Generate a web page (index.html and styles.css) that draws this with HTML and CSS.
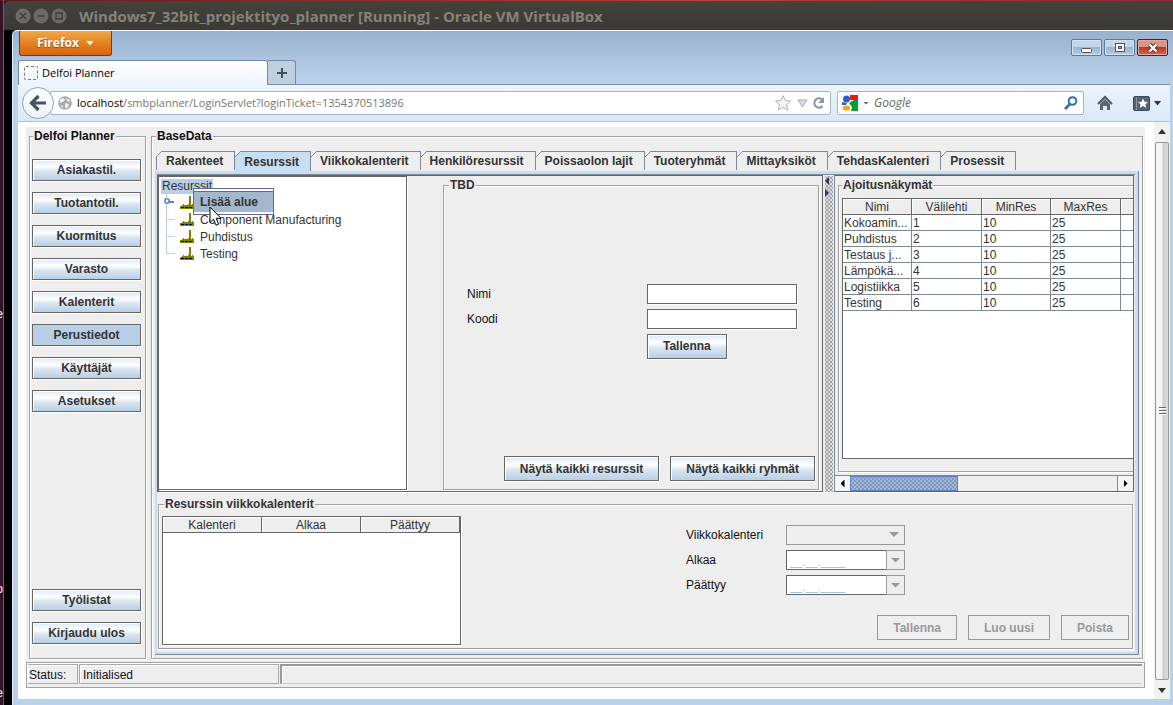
FILE: index.html
```html
<!DOCTYPE html>
<html lang="fi">
<head>
<meta charset="utf-8">
<title>Delfoi Planner</title>
<link rel="stylesheet" href="styles.css">
</head>
<body>
<div class="desktop">
  <div class="edge" aria-hidden="true"><span class="edge-a">e</span><span class="edge-b">o</span><span class="edge-c">e</span></div>
  <div class="vm">
    <header class="vm-title">
      <svg class="vm-buttons" width="54" height="18" viewBox="0 0 54 18" aria-hidden="true">
        <g fill="#6b6a65"><circle cx="9" cy="9" r="7.5"/><circle cx="27" cy="9" r="7.5"/><circle cx="45" cy="9" r="7.5"/></g>
        <path d="M6 6l6 6M12 6l-6 6M23.500 9h7M42 6h6v6h-6z" stroke="#3c3b37" stroke-width="1.3" fill="none"/>
      </svg>
      <h1 class="vm-name">Windows7_32bit_projektityo_planner [Running] - Oracle VM VirtualBox</h1>
    </header>
    <div class="browser">
      <div class="caption">
        <button class="firefox" type="button">Firefox <i class="caret white"></i></button>
        <div class="win-buttons">
          <button class="win" type="button" aria-label="Minimize"><svg width="12" height="12" viewBox="0 0 12 12"><rect x=".5" y="6.500" width="10" height="4" rx="1" fill="#f4f6f8" stroke="#4a5363"/></svg></button>
          <button class="win" type="button" aria-label="Maximize"><svg width="12" height="12" viewBox="0 0 12 12"><rect x="1.500" y="1.500" width="9" height="8" fill="#fff" stroke="#4a5363"/><rect x="4.500" y="4.500" width="3" height="2" fill="#8ba3bd" stroke="#4a5363"/></svg></button>
          <button class="win close" type="button" aria-label="Close"><svg width="12" height="12" viewBox="0 0 12 12"><path d="M2.500 2.500l7 7M9.500 2.500l-7 7" stroke="#4e3540" stroke-width="4.400"/><path d="M2.500 2.500l7 7M9.500 2.500l-7 7" stroke="#fff" stroke-width="2.400"/></svg></button>
        </div>
      </div>
      <div class="tabstrip">
        <div class="btab"><span class="blank-icon"></span>Delfoi Planner</div>
        <button class="newtab" type="button" aria-label="New tab"><svg width="12" height="12" viewBox="0 0 12 12"><path d="M6 1v10M1 6h10" stroke="#3f4d5c" stroke-width="2"/></svg></button>
      </div>
      <div class="navbar">
        <button class="back" type="button" aria-label="Back"><svg width="18" height="18" viewBox="0 0 18 18"><path d="M9.500 2L2.500 9l7 7M3 9h14" fill="none" stroke="#46525f" stroke-width="3.200"/></svg></button>
        <div class="urlbar">
          <svg width="14" height="14" viewBox="0 0 14 14" aria-hidden="true"><circle cx="7" cy="7" r="6.800" fill="#a9a9a9"/><path d="M2 3l4-1 1 2-2 2-3 1zM8 2l4 2-1 2-2-1zM7 7l4 1-1 3-2 2-1-3zM2 9l3 1v2z" fill="#f2f2f2"/></svg>
          <span class="url"><b>localhost</b>/smbplanner/LoginServlet?loginTicket=1354370513896</span>
          <svg width="52" height="18" viewBox="0 0 52 18" aria-hidden="true"><path d="M9 1.500l2.300 5 5.200.6-3.900 3.600 1.100 5.300L9 13.400 4.300 16l1.100-5.300L1.500 7.100l5.200-.6z" fill="#f3f3f3" stroke="#b3b3b3"/><path d="M24 6h9l-4.500 7z" fill="#d5dde5" stroke="#a3afbb"/><path d="M48 5.500A4.600 4.600 0 1 0 48.500 12" fill="none" stroke="#8797a6" stroke-width="2.200"/><path d="M50 3v6h-6z" fill="#8797a6"/></svg>
        </div>
        <div class="search">
          <svg width="16" height="16" viewBox="0 0 16 16" aria-hidden="true"><path d="M0 0h16v16H0z" fill="#fff"/><path d="M8 0h8v5H8z" fill="#e21b1b"/><path d="M7 8l5-3h4v11H9l1-4z" fill="#0a9a3c"/><circle cx="4.500" cy="4" r="3.500" fill="#2a5fc4"/><path d="M0 7l5 1-1 2H0z" fill="#2a5fc4"/><ellipse cx="4.500" cy="13" rx="3.800" ry="2.600" fill="#f2a90f"/></svg>
          <i class="caret small"></i>
          <input class="search-box" type="text" aria-label="Search" placeholder="Google">
          <svg width="14" height="14" viewBox="0 0 14 14" aria-hidden="true"><circle cx="8.500" cy="5" r="3.800" fill="none" stroke="#2f6fb0" stroke-width="2"/><path d="M6 8l-5 5" stroke="#2f6fb0" stroke-width="2.600"/></svg>
        </div>
        <button class="tool" type="button" aria-label="Home"><svg width="16" height="16" viewBox="0 0 16 16"><path d="M1 9l7-7 7 7" fill="none" stroke="#4a5563" stroke-width="2"/><path d="M3 9l5-5 5 5v6h-3v-4H6v4H3z" fill="#5a6572"/></svg></button>
        <button class="tool marks" type="button" aria-label="Bookmarks"><svg width="17" height="15" viewBox="0 0 17 15"><rect x=".5" y=".5" width="16" height="14" rx="1.500" fill="#566270" stroke="#3f4a57"/><path d="M3.500 1v13" stroke="#8d98a5"/><path d="M10 2.500l1.500 3.200 3.500.3-2.600 2.300.8 3.500L10 10l-3.200 1.800.8-3.500L5 6l3.500-.3z" fill="#fff"/></svg><i class="caret dark"></i></button>
      </div>
      <div class="viewport">
        <main class="page">
          <div class="applet">
            <fieldset class="etched side">
              <legend>Delfoi Planner</legend>
              <button class="jbtn" type="button">Asiakastil.</button>
              <button class="jbtn" type="button">Tuotantotil.</button>
              <button class="jbtn" type="button">Kuormitus</button>
              <button class="jbtn" type="button">Varasto</button>
              <button class="jbtn" type="button">Kalenterit</button>
              <button class="jbtn pressed" type="button">Perustiedot</button>
              <button class="jbtn" type="button">Käyttäjät</button>
              <button class="jbtn" type="button">Asetukset</button>
              <button class="jbtn push" type="button">Työlistat</button>
              <button class="jbtn" type="button">Kirjaudu ulos</button>
            </fieldset>
            <fieldset class="etched base">
              <legend>BaseData</legend>
              <div class="tabs" role="tablist">
                <button class="tab" role="tab" type="button">Rakenteet</button>
                <button class="tab on" role="tab" type="button" aria-selected="true">Resurssit</button>
                <button class="tab" role="tab" type="button">Viikkokalenterit</button>
                <button class="tab" role="tab" type="button">Henkilöresurssit</button>
                <button class="tab" role="tab" type="button">Poissaolon lajit</button>
                <button class="tab" role="tab" type="button">Tuoteryhmät</button>
                <button class="tab" role="tab" type="button">Mittayksiköt</button>
                <button class="tab" role="tab" type="button">TehdasKalenteri</button>
                <button class="tab" role="tab" type="button">Prosessit</button>
              </div>
              <div class="pane">
                <div class="inner">
                  <div class="split">
                    <div class="left">
                      <div class="tree">
                        <span class="root">Resurssit</span>
                        <ul class="nodes">
                          <li class="node"><svg class="branch" width="10" height="17" viewBox="0 0 10 17"><path d="M1.500 0v17" stroke="#b8cfe5"/><path d="M3 8h6" stroke="#6382bf" stroke-width="2"/></svg><svg class="factory" width="14" height="13" viewBox="0 0 14 13"><use href="#plant"/></svg></li>
                          <li class="node"><svg class="branch" width="10" height="17" viewBox="0 0 10 17"><path d="M1.500 0v17M1 8.500h9" stroke="#b8cfe5"/></svg><svg class="factory" width="14" height="13" viewBox="0 0 14 13"><g id="plant"><path d="M9 0h2v9h1V8h1v1h1v4H0V10h2V9h1v-1h1v1h4V8h1z" fill="#808000"/><path d="M1 11.500h3M5 11.500h3M9 11.500h3" stroke="#000080"/></g></svg>Component Manufacturing</li>
                          <li class="node"><svg class="branch" width="10" height="17" viewBox="0 0 10 17"><path d="M1.500 0v17M1 8.500h9" stroke="#b8cfe5"/></svg><svg class="factory" width="14" height="13" viewBox="0 0 14 13"><use href="#plant"/></svg>Puhdistus</li>
                          <li class="node"><svg class="branch" width="10" height="17" viewBox="0 0 10 17"><path d="M1.500 0v8.500H10" stroke="#b8cfe5" fill="none"/></svg><svg class="factory" width="14" height="13" viewBox="0 0 14 13"><use href="#plant"/></svg>Testing</li>
                        </ul>
                        <svg class="handle" width="8" height="8" viewBox="0 0 8 8" aria-hidden="true"><circle cx="4" cy="4" r="2.200" fill="#fff" stroke="#6382bf" stroke-width="1.600"/></svg>
                        <div class="popup" role="menu"><button class="item" role="menuitem" type="button">Lisää alue</button></div>
                        <svg class="cursor" width="13" height="21" viewBox="0 0 13 21" aria-hidden="true"><path d="M1 1v15.500l3.500-3.300 2.500 6 2.600-1.100L7.200 12.300H12z" fill="#fff" stroke="#000"/></svg>
                      </div>
                      <fieldset class="etched tbd">
                        <legend>TBD</legend>
                        <div class="fields">
                          <label for="nimi">Nimi</label><input class="jtext" id="nimi" type="text">
                          <label for="koodi">Koodi</label><input class="jtext" id="koodi" type="text">
                          <button class="jbtn wide save" type="button">Tallenna</button>
                        </div>
                        <div class="actions">
                          <button class="jbtn wide" type="button">Näytä kaikki resurssit</button>
                          <button class="jbtn wide" type="button">Näytä kaikki ryhmät</button>
                        </div>
                      </fieldset>
                    </div>
                    <div class="divider"><i class="tri l"></i><i class="tri r"></i></div>
                    <div class="right">
                      <div class="clip">
                        <fieldset class="etched views">
                          <legend>Ajoitusnäkymät</legend>
                          <div class="grid-box">
                            <table class="jtable">
                              <colgroup><col class="c69"><col class="c70"><col class="c69"><col class="c70"><col class="c70"></colgroup>
                              <thead><tr><th>Nimi</th><th>Välilehti</th><th>MinRes</th><th>MaxRes</th><th></th></tr></thead>
                              <tbody>
                                <tr><td>Kokoamin...</td><td>1</td><td>10</td><td>25</td><td></td></tr>
                                <tr><td>Puhdistus</td><td>2</td><td>10</td><td>25</td><td></td></tr>
                                <tr><td>Testaus j...</td><td>3</td><td>10</td><td>25</td><td></td></tr>
                                <tr><td>Lämpökä...</td><td>4</td><td>10</td><td>25</td><td></td></tr>
                                <tr><td>Logistiikka</td><td>5</td><td>10</td><td>25</td><td></td></tr>
                                <tr><td>Testing</td><td>6</td><td>10</td><td>25</td><td></td></tr>
                              </tbody>
                            </table>
                          </div>
                        </fieldset>
                      </div>
                      <div class="hscroll">
                        <button class="arrow" type="button" aria-label="Left"><i class="tri black l"></i></button>
                        <div class="track"><div class="thumb"></div></div>
                        <button class="arrow end" type="button" aria-label="Right"><i class="tri black r"></i></button>
                      </div>
                    </div>
                  </div>
                  <fieldset class="etched weeks">
                    <legend>Resurssin viikkokalenterit</legend>
                    <div class="list">
                      <table class="jtable"><thead><tr><th>Kalenteri</th><th>Alkaa</th><th>Päättyy</th></tr></thead></table>
                    </div>
                    <div class="week-form">
                      <div class="rows">
                        <label for="vk">Viikkokalenteri</label>
                        <div class="combo off"><select id="vk" disabled><option></option></select><i class="caret gray"></i></div>
                        <label for="alkaa">Alkaa</label>
                        <div class="combo"><input id="alkaa" type="text" value="__.__.____"><button class="drop" type="button" aria-label="Avaa"><i class="caret gray"></i></button></div>
                        <label for="paattyy">Päättyy</label>
                        <div class="combo"><input id="paattyy" type="text" value="__.__.____"><button class="drop" type="button" aria-label="Avaa"><i class="caret gray"></i></button></div>
                      </div>
                      <div class="actions">
                        <button class="jbtn wide" type="button" disabled>Tallenna</button>
                        <button class="jbtn wide" type="button" disabled>Luo uusi</button>
                        <button class="jbtn wide" type="button" disabled>Poista</button>
                      </div>
                    </div>
                  </fieldset>
                </div>
              </div>
            </fieldset>
          </div>
          <footer class="status"><span class="cell name">Status:</span><span class="cell value">Initialised</span><span class="cell rest"></span></footer>
        </main>
        <div class="vscroll" aria-hidden="true"><i class="caret dark up"></i><div class="vthumb"><span class="grip"></span></div><i class="caret dark"></i></div>
      </div>
    </div>
  </div>
</div>
</body>
</html>
```
FILE: styles.css
```css
* { box-sizing: border-box; }
body { margin: 0; font: 12px/14px "Liberation Sans", Arial, sans-serif; color: #333; }
button, input, select { font: inherit; color: inherit; margin: 0; padding: 0; border-radius: 0; }
svg { display: block; flex: none; }
fieldset { margin: 0; min-width: 0; }

.desktop { display: flex; min-height: 100vh; background: linear-gradient(90deg, #5e1a24, #b8432f 60%, #8c2a35) top / 100% 1px no-repeat #35122a; }
.edge { position: relative; width: 4px; flex: none; overflow: hidden; border-right: 1px solid #6d5f68; color: #fff; }
.edge span { position: absolute; right: 0; }
.edge-a { top: 307px; }
.edge-b { top: 582px; }
.edge-c { top: 686px; }
.vm { flex: 1; min-width: 0; display: flex; flex-direction: column; margin-top: 1px; background: #000; border-top-left-radius: 5px; }
.vm-title { display: flex; align-items: center; height: 29px; gap: 11px; padding-left: 10px; background: linear-gradient(#43423d, #3a3934); border-top-left-radius: 5px; }
.vm-name { margin: 0; font: bold 15px/20px "Open Sans", sans-serif; color: #85837a; white-space: nowrap; }

.browser { flex: 1; display: flex; flex-direction: column; margin-left: 8px; padding: 0 3px 6px 5px; border-top: 1px solid #fff; border-left: 1px solid #e5eefa; border-top-left-radius: 5px; background: linear-gradient(#98b1ce, #b8cfe9 45px, #bbd1ec 80px, #b9d1ea); }
.caption { display: flex; justify-content: space-between; height: 29px; padding-left: 1px; }
.firefox { display: flex; align-items: center; justify-content: center; gap: 7px; width: 93px; height: 25px; border: 1px solid #7a3c0c; border-top: 0; border-radius: 0 0 3px 3px; background: linear-gradient(#f1a846, #e27b1c 60%, #d9650f); color: #fff; font: bold 12px/16px "Open Sans", sans-serif; text-shadow: 0 1px 1px #8a4a10; }
.caret { display: block; width: 8px; height: 5px; clip-path: polygon(0 0, 100% 0, 50% 100%); background: #333; }
.caret.white { background: #fff; }
.caret.small { width: 6px; height: 3px; background: #666; }
.caret.gray { width: 10px; height: 5px; background: #999; }
.caret.up { transform: rotate(180deg); }
.win-buttons { display: flex; gap: 2px; padding: 8px 2px 0 0; }
.win { display: flex; align-items: center; justify-content: center; width: 31px; height: 17px; border: 1px solid #5f7893; border-radius: 2px; box-shadow: inset 0 0 0 1px #d3e2f0; background: linear-gradient(#c3d6ea 48%, #98b4d0 50%, #b6cde4); }
.win.close { border-color: #5b1a22; box-shadow: inset 0 0 0 1px #e6a79c; background: linear-gradient(#dd9487 48%, #b53a26 50%, #cf6a50); }
.tabstrip { display: flex; height: 25px; border-bottom: 1px solid #7d8fa3; font: 11px/16px "Open Sans", sans-serif; color: #000; }
.btab { display: flex; align-items: center; gap: 4px; width: 250px; height: 25px; padding-left: 5px; border: 1px solid #75899e; border-bottom: 0; border-radius: 3px 3px 0 0; background: linear-gradient(#fff, #edf4fd); }
.blank-icon { width: 14px; height: 14px; border: 1px dashed #777; border-radius: 2px; }
.newtab { display: flex; align-items: center; justify-content: center; width: 28px; height: 24px; border: 1px solid #75899e; border-left: 0; border-bottom: 0; border-radius: 0 3px 0 0; background: #c0cfdd; }
.navbar { display: flex; align-items: center; height: 37px; padding-left: 4px; background: linear-gradient(#edf4fd, #d9e8f8); border-bottom: 1px solid #a9c2d9; font: 12px/16px "Open Sans", sans-serif; }
.back { display: flex; align-items: center; justify-content: center; z-index: 1; flex: none; width: 32px; height: 32px; border: 1px solid #8fa6bd; border-radius: 50%; background: linear-gradient(#fff, #eaf2fb); }
.urlbar { flex: 1; min-width: 0; display: flex; align-items: center; gap: 5px; height: 24px; margin: 0 6px 0 -4px; padding: 0 4px 0 7px; border: 1px solid #9fb6cc; border-radius: 2px; background: #fff; }
.url { flex: 1; min-width: 0; overflow: hidden; white-space: nowrap; font-size: 11px; color: #767676; }
.url b { font-weight: normal; color: #000; }
.search { display: flex; align-items: center; gap: 5px; width: 247px; height: 24px; padding: 0 5px 0 4px; border: 1px solid #9fb6cc; border-radius: 2px; background: #fff; }
.search-box { flex: 1; min-width: 0; border: 0; outline: 0; background: none; font-style: italic; }
.search-box::placeholder { color: #666; opacity: 1; }
.tool { display: flex; align-items: center; justify-content: center; gap: 4px; width: 42px; height: 24px; border: 0; background: none; }
.tool.marks { width: 44px; padding-right: 2px; }

.viewport { flex: 1; display: flex; background: #fff; }
.page { flex: 1; min-width: 0; display: flex; flex-direction: column; padding: 5px 9px 11px 8px; }
.applet { flex: 1; display: flex; gap: 5px; padding: 2px 2px 3px 3px; background: #eee; }
.etched { display: flex; flex-direction: column; border: 1px solid #a0a0a0; box-shadow: 1px 1px 0 #fff, inset 1px 1px 0 #fff; padding: 0; background: #eee; }
legend { padding: 0 1px; background: #eee; font-weight: bold; white-space: nowrap; }
.side > legend, .base > legend { margin-left: 1px; color: #111; }
.side { width: 117px; flex: none; padding: 16px 4px 14px 2px; gap: 11px; }
.push { margin-top: auto; }
.jbtn { height: 22px; flex: none; border: 1px solid #666; box-shadow: 1px 1px 0 #fff, inset 1px 1px 0 #fff; background: linear-gradient(#dde8f3, #fff 35%, #dbe6f1 55%, #b8cfe5); font-weight: bold; color: #333; white-space: nowrap; }
.side .jbtn { width: 109px; }
.jbtn.pressed { background: #b8cfe5; box-shadow: 1px 1px 0 #fff; }
.jbtn.wide { height: 25px; padding: 0 15px; }
.jbtn:disabled { border-color: #999; color: #999; background: #eee; box-shadow: none; }

.base { flex: 1; padding: 8px 3px 3px 3px; }
.tabs { display: flex; height: 20px; padding-left: 1px; }
.tab { position: relative; height: 19px; padding: 0 11px 0 9px; border: 0; border-top: 1px solid #7a8a99; border-right: 1px solid #7a8a99; background: #eee; font-weight: bold; color: #333; white-space: nowrap; }
.tab:first-child { border-left: 1px solid #7a8a99; }
.tab::before { content: ""; position: absolute; left: 0; top: -1px; width: 6px; height: 6px; background: linear-gradient(135deg, #eee 44%, #7a8a99 44% 56%, transparent 56%); }
.tab:first-child::before { left: -1px; }
.tab.on { height: 20px; background: #c8ddf2; }
.pane { flex: 1; display: flex; padding: 3px 3px 2px 2px; border-right: 1px solid #7a8a99; border-bottom: 1px solid #7a8a99; background: #c8ddf2; }
.inner { flex: 1; min-width: 0; display: flex; flex-direction: column; gap: 5px; padding: 0 1px 3px 0; background: #eee; border-top: 1px solid #7a8a99; }
.split { flex: 1; display: flex; }
.left { flex: 1; min-width: 0; display: flex; border: 1px solid #666; border-left-width: 2px; box-shadow: 0 1px 0 #fff; padding: 0 3px 1px 0; gap: 36px; }
.tree { position: relative; width: 248px; flex: none; padding: 2px 0 0 2px; background: #fff; border: 1px solid #666; border-left: 0; box-shadow: 1px 1px 0 #fff; }
.root { display: block; width: fit-content; height: 15px; padding: 0 1px; background: #b8cfe5; }
.nodes { list-style: none; margin: 0; padding: 0 0 0 4px; }
.node { display: flex; align-items: center; height: 17px; white-space: nowrap; }
.factory { margin: 0 6px 0 5px; }
.handle { position: absolute; left: 4px; top: 20px; }
.popup { position: absolute; left: 34px; top: 11px; width: 81px; padding: 2px 0; border: 1px solid #666699; background: #fff; }
.item { display: block; width: 100%; height: 21px; padding-left: 6px; border: 0; border-top: 1px solid #666699; background: #a3b8cc; font-weight: bold; color: #333; text-align: left; }
.cursor { position: absolute; left: 50px; top: 29px; }
.tbd { flex: 1; margin-top: 2px; padding: 0 3px 8px 23px; }
.tbd > legend { margin-left: -18px; }
.fields { flex: 1; display: grid; grid-template-columns: 180px 150px; grid-auto-rows: auto; align-content: center; align-items: center; row-gap: 5px; padding-bottom: 6px; color: #111; }
.jtext { width: 150px; height: 20px; border: 1px solid #666; box-shadow: 1px 1px 0 #fff; background: #fff; }
.save { grid-column: 2; justify-self: start; }
.actions { display: flex; justify-content: flex-end; gap: 11px; }
.divider { width: 8px; margin: 1px 1px 0 2px; padding-top: 1px; background: radial-gradient(circle, #777 0.5px, transparent 1px) 0 0 / 4px 4px, radial-gradient(circle, #777 0.5px, transparent 1px) 2px 2px / 4px 4px, #ddd; }
.tri { display: block; width: 4px; height: 8px; margin-bottom: 4px; background: #333366; }
.tri.l { clip-path: polygon(100% 0, 100% 100%, 0 50%); }
.tri.r { clip-path: polygon(0 0, 100% 50%, 0 100%); }
.tri.black { background: #000; margin: 0 auto; }
.right { width: 300px; flex: none; display: flex; flex-direction: column; border: 1px solid #666; border-left-color: #7a8a99; box-shadow: 0 1px 0 #fff; }
.clip { flex: 1; display: flex; overflow: hidden; padding: 2px 0 3px 3px; }
.views { flex: 0 0 400px; padding: 6px 0 12px 3px; }
.grid-box { flex: 1; border: 1px solid #666; background: #fff; }
.jtable { border-collapse: separate; border-spacing: 0; table-layout: fixed; width: 100%; }
.views .jtable { width: 348px; }
.c69 { width: 69px; }
.c70 { width: 70px; }
.jtable th { height: 16px; padding: 0; border-right: 1px solid #666; border-bottom: 1px solid #666; background: #eee; box-shadow: inset 1px 1px 0 #fff; font-weight: normal; }
.jtable td { height: 16px; padding: 0 0 0 1px; border-right: 1px solid #7a8a99; border-bottom: 1px solid #7a8a99; white-space: nowrap; overflow: hidden; }
.hscroll { display: flex; height: 16px; border-top: 1px solid #7a8a99; }
.arrow { width: 15px; border: 0; background: #f4f4f4; }
.arrow.end { border-left: 1px solid #7a8a99; width: 16px; }
.track { flex: 1; display: flex; background: #eee; }
.thumb { width: 108px; border: 1px solid #6382bf; background: radial-gradient(circle, #6382bf 0.5px, transparent 1px) 0 0 / 4px 4px, radial-gradient(circle, #6382bf 0.5px, transparent 1px) 2px 2px / 4px 4px, #a3b8cc; }
.weeks { display: flex; flex-direction: row; margin: 0 1px 0 1px; padding: 5px 3px 3px 3px; }
.weeks > legend { margin-left: 2px; }
.list { width: 299px; height: 129px; flex: none; border: 1px solid #666; box-shadow: 1px 1px 0 #fff; background: #fff; }
.week-form { flex: 1; display: flex; flex-direction: column; justify-content: space-between; padding: 9px 0 5px 225px; color: #111; }
.rows { display: grid; grid-template-columns: 100px 119px; row-gap: 5px; align-items: center; }
.combo { position: relative; display: flex; height: 20px; }
.combo select { appearance: none; flex: 1; border: 1px solid #999; background: #eee; opacity: 1; }
.combo.off .caret { position: absolute; right: 6px; top: 7px; }
.combo input { flex: 1; min-width: 0; padding: 3px 0 0 3px; border: 1px solid #666; border-right: 0; background: #fff; color: #8fb4d8; font-size: 11px; }
.drop { display: flex; align-items: center; justify-content: center; width: 19px; border: 1px solid #999; background: #eee; }

.status { display: flex; height: 26px; padding: 1px 2px 3px 1px; gap: 1px; border: 1px solid #a0a0a0; background: #eee; box-shadow: inset 1px 1px 0 #fff; color: #111; }
.cell { height: 20px; padding: 3px 1px; border: 1px solid #aaa; box-shadow: inset 1px 1px 0 #fff; }
.name { width: 50px; border-left: 0; }
.value { width: 200px; padding-left: 3px; }
.rest { flex: 1; border: 0; border-top: 2px solid #999; border-left: 2px solid #999; border-bottom: 1px solid #ccc; }
.vscroll { width: 16px; display: flex; flex-direction: column; align-items: center; gap: 8px; padding: 7px 0 6px; background: #f1f1f1; }
.vthumb { flex: 1; display: flex; align-items: center; justify-content: center; width: 14px; border: 1px solid #979797; border-radius: 2px; background: linear-gradient(90deg, #f5f5f5 45%, #cfcfcf 60%, #dcdcdc); }
.grip { width: 7px; height: 9px; background: repeating-linear-gradient(#666 0 1px, #fff 1px 2px, transparent 2px 3px); }
```
